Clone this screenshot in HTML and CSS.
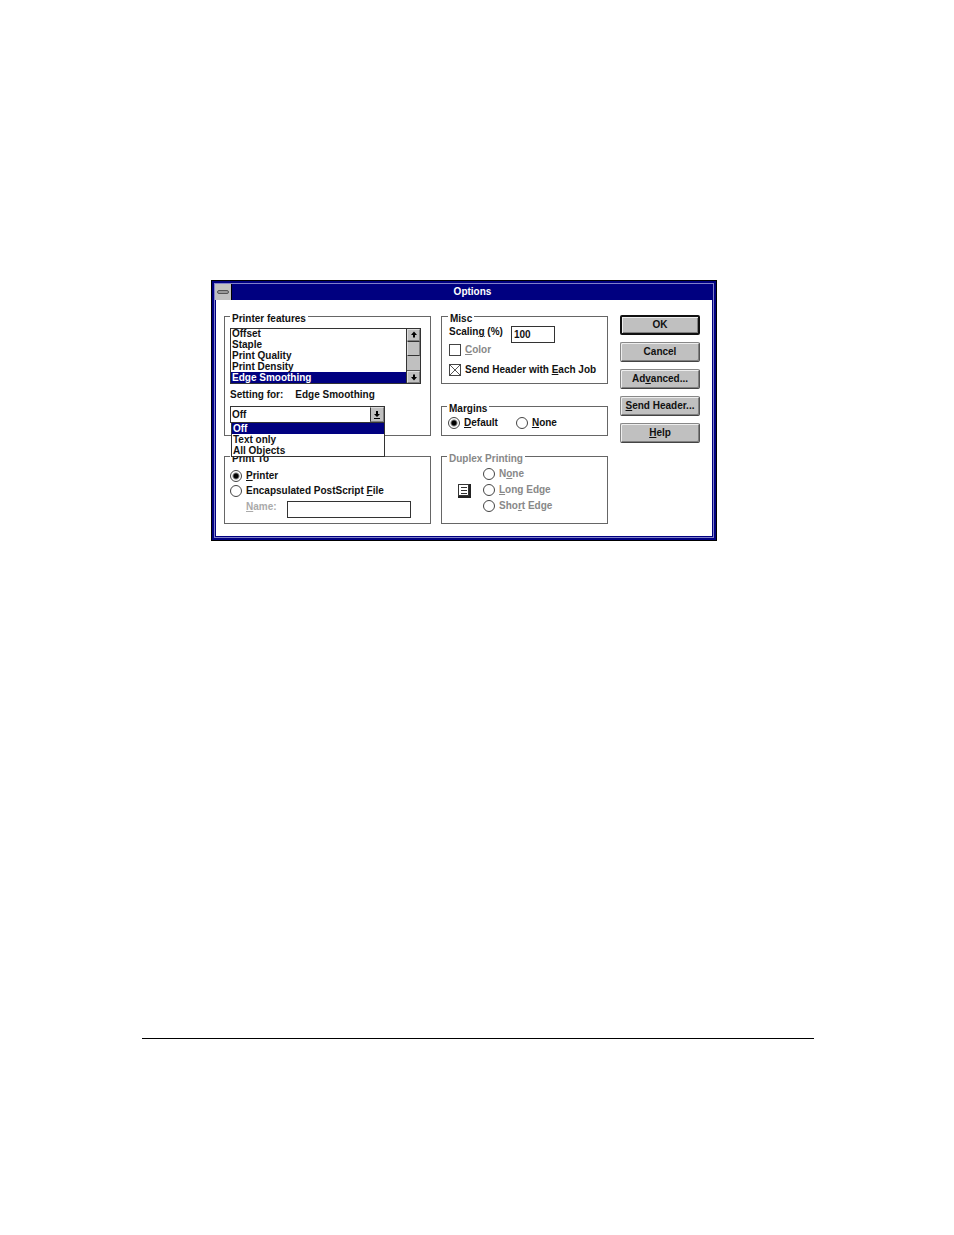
FILE: index.html
```html
<!DOCTYPE html>
<html lang="en">
<head>
  <meta charset="UTF-8">
  <meta name="viewport" content="width=device-width, initial-scale=1.0">
  <title>Options</title>
  <link rel="stylesheet" href="styles.css">
</head>
<body>

  <main class="window">
    <div class="window-inner">
      <header class="titlebar">
        <button type="button" class="sysmenu" aria-label="System menu"><span class="sysmenu-bar"></span></button>
        <h1>Options</h1>
      </header>

      <form class="dialog">
        <div class="groups">

          <fieldset class="features">
            <legend>Printer features</legend>
            <div class="listbox">
              <select size="5" aria-label="Printer features">
                <option>Offset</option>
                <option>Staple</option>
                <option>Print Quality</option>
                <option>Print Density</option>
                <option selected>Edge Smoothing</option>
              </select>
              <div class="scrollbar">
                <button type="button" aria-label="Scroll up">
                  <svg width="8" height="8" viewBox="0 0 8 8"><path d="M4 .5L7 4H5V6.500H3V4H1z"/></svg>
                </button>
                <span class="thumb"></span>
                <span class="track"></span>
                <button type="button" aria-label="Scroll down">
                  <svg width="8" height="8" viewBox="0 0 8 8"><path d="M4 7.500L7 4H5V1.500H3V4H1z"/></svg>
                </button>
              </div>
            </div>
            <div class="setting">
              <label for="setting">Setting for:</label>
              <span>Edge Smoothing</span>
            </div>
            <div class="combo">
              <select id="setting">
                <option selected>Off</option>
                <option>Text only</option>
                <option>All Objects</option>
              </select>
              <span class="combo-arrow">
                <svg width="8" height="10" viewBox="0 0 8 10"><path d="M3 1H5V4H7L4 7L1 4H3zM1 8H7V9H1z"/></svg>
              </span>
              <ul class="menu">
                <li class="selected">Off</li>
                <li>Text only</li>
                <li>All Objects</li>
              </ul>
            </div>
          </fieldset>

          <div class="stack">
            <fieldset class="misc">
              <legend>Misc</legend>
              <div class="scaling">
                <label for="scaling">Scalin<u>g</u> (%)</label>
                <input type="text" id="scaling" value="100">
              </div>
              <label class="check disabled"><input type="checkbox" disabled><span><u>C</u>olor</span></label>
              <label class="check"><input type="checkbox" checked><span>Send Header with <u>E</u>ach Job</span></label>
            </fieldset>

            <fieldset class="margins">
              <legend>Margins</legend>
              <label class="radio"><input type="radio" name="margins" checked><span><u>D</u>efault</span></label>
              <label class="radio"><input type="radio" name="margins"><span><u>N</u>one</span></label>
            </fieldset>
          </div>

          <fieldset class="print-to">
            <legend>Print To</legend>
            <label class="radio"><input type="radio" name="dest" checked><span><u>P</u>rinter</span></label>
            <label class="radio"><input type="radio" name="dest"><span>Encapsulated PostScript <u>F</u>ile</span></label>
            <div class="filename">
              <label for="filename"><u>N</u>ame:</label>
              <input type="text" id="filename">
            </div>
          </fieldset>

          <fieldset class="duplex" disabled>
            <legend>Duplex Printing</legend>
            <svg class="page-icon" width="14" height="15" viewBox="0 0 14 15">
              <path class="page-shadow" d="M1 1H14V15H1z"/>
              <path class="page-sheet" d="M1.500 1.500H11.500V12.500H1.500z"/>
              <path class="page-lines" d="M4 4.500H10M4 7.500H10M4 10.500H10"/>
            </svg>
            <div class="choices">
              <label class="radio"><input type="radio" name="duplex"><span>N<u>o</u>ne</span></label>
              <label class="radio"><input type="radio" name="duplex"><span><u>L</u>ong Edge</span></label>
              <label class="radio"><input type="radio" name="duplex"><span>Sho<u>r</u>t Edge</span></label>
            </div>
          </fieldset>

        </div>

        <div class="buttons">
          <button type="submit" class="btn default">OK</button>
          <button type="button" class="btn">Cancel</button>
          <button type="button" class="btn">Ad<u>v</u>anced...</button>
          <button type="button" class="btn"><u>S</u>end Header...</button>
          <button type="button" class="btn"><u>H</u>elp</button>
        </div>
      </form>
    </div>
  </main>

  <hr class="page-rule">

</body>
</html>
```
FILE: styles.css
```css
* {
  box-sizing: border-box;
}

body {
  display: flex;
  flex-direction: column;
  min-height: 100vh;
  margin: 0;
  padding: 280px 140px 196px 142px;
  background: #fff;
  color: #111;
  font: bold 10px/12px "Liberation Sans", Arial, sans-serif;
}

button,
input,
select,
option {
  margin: 0;
  color: inherit;
  font: inherit;
}

svg {
  display: block;
}

/* window frame */
.window {
  margin: 0 97px 0 69px;
  padding: 2px;
  border: 1px solid #000;
  background: #000080;
}

.window-inner {
  border: 1px solid #8080c8;
}

.titlebar {
  display: flex;
  height: 16px;
  color: #fff;
}

.titlebar h1 {
  flex: 1;
  margin: 0;
  font-size: 10px;
  line-height: 16px;
  text-align: center;
}

.sysmenu {
  display: flex;
  align-items: center;
  justify-content: center;
  width: 17px;
  padding: 0;
  border: 0;
  border-right: 1px solid #000;
  background: #c0c0c0;
}

.sysmenu-bar {
  width: 12px;
  height: 4px;
  border: 1px solid #555;
  border-radius: 2px;
  background: #999;
}

.dialog {
  display: flex;
  gap: 12px;
  margin: 0 1px 1px;
  padding: 8px 12px 12px 8px;
  background: #fff;
}

.groups {
  display: grid;
  flex: 1;
  grid-template-columns: 207fr 167fr;
  gap: 12px 10px;
}

.stack {
  display: flex;
  flex-direction: column;
  justify-content: space-between;
}

/* group boxes */
fieldset {
  min-width: 0;
  margin: 0;
  padding: 0 5px;
  border: 1px solid #666;
}

legend {
  padding: 5px 2px 0;
}

/* printer features */
.features {
  padding: 3px 9px 12px 5px;
}

.listbox {
  display: flex;
  height: 56px;
  border: 1px solid #333;
}

.listbox select {
  flex: 1;
  height: 54px;
  padding: 0;
  border: 0;
  outline: 0;
  border-radius: 0;
  background: #fff;
  overflow: hidden;
}

.listbox option {
  min-height: 11px;
  padding: 0 1px;
  line-height: 11px;
}

.listbox option:checked {
  background: #000080 linear-gradient(#000080, #000080);
  color: #fff;
}

.scrollbar {
  display: flex;
  flex-direction: column;
  width: 14px;
  border-left: 1px solid #333;
}

.scrollbar button,
.thumb,
.combo-arrow {
  display: flex;
  align-items: center;
  justify-content: center;
  padding: 0;
  border: 1px solid;
  border-color: #ddd #808080 #808080 #ddd;
  border-radius: 0;
  background: #c0c0c0;
}

.scrollbar button {
  height: 12px;
}

.thumb {
  height: 15px;
  border-top-color: #333;
  border-bottom-color: #333;
}

.track {
  flex: 1;
  border-bottom: 1px solid #555;
  background: #c0c0c0;
}

.setting {
  display: flex;
  gap: 12px;
  margin: 5px 0;
}

.combo {
  position: relative;
  display: flex;
  width: 155px;
  height: 17px;
  border: 1px solid #333;
}

.combo select {
  flex: 1;
  padding: 0 1px;
  border: 0;
  border-radius: 0;
  background: #fff;
  appearance: none;
}

.combo-arrow {
  width: 14px;
  border-left-color: #333;
}

/* open list hangs over the group below */
.menu {
  position: absolute;
  top: 15px;
  left: 0;
  right: -1px;
  z-index: 1;
  margin: 0;
  padding: 0;
  border: 1px solid #333;
  background: #fff;
  list-style: none;
}

.menu li {
  padding: 0 1px;
  line-height: 11px;
}

.menu .selected {
  background: #000080;
  color: #fff;
}

/* text boxes, check boxes, radio buttons */
input[type="text"] {
  height: 17px;
  padding: 0 2px;
  border: 1px solid #333;
  border-radius: 0;
  background: #fff;
}

.check,
.radio {
  display: flex;
  align-items: center;
  gap: 4px;
}

input[type="checkbox"],
input[type="radio"] {
  flex: none;
  width: 12px;
  height: 12px;
  border: 1px solid #444;
  background: #fff;
  appearance: none;
}

input[type="radio"] {
  border-radius: 50%;
}

input[type="checkbox"]:checked {
  background:
    linear-gradient(45deg, transparent 46%, #555 46%, #555 54%, transparent 54%),
    linear-gradient(135deg, transparent 46%, #555 46%, #555 54%, transparent 54%);
}

input[type="radio"]:checked {
  background: radial-gradient(circle, #000 2px, #fff 4px);
}

.misc {
  padding: 1px 5px 6px 7px;
}

.misc legend,
.margins legend,
.duplex legend {
  margin-left: -1px;
}

.scaling {
  display: flex;
  gap: 8px;
}

.scaling input {
  width: 44px;
}

.check {
  height: 14px;
}

.check + .check {
  margin-top: 6px;
}

.disabled {
  color: #888;
}

.margins {
  display: flex;
  gap: 18px;
  padding: 1px 6px 5px;
}

.margins .radio {
  height: 14px;
}

.print-to {
  padding: 3px 5px 5px;
}

.print-to .radio {
  height: 15px;
}

.filename {
  display: flex;
  gap: 10px;
  margin: 3px 14px 0 16px;
  color: #aaa;
}

.filename input {
  flex: 1;
  min-width: 0;
}

.duplex {
  display: flex;
  align-items: center;
  gap: 12px;
  padding: 1px 6px 9px;
  color: #888;
}

.duplex .radio {
  height: 16px;
}

.page-icon {
  margin-left: 9px;
}

.page-shadow {
  fill: #222;
}

.page-sheet {
  fill: #fff;
  stroke: #333;
}

.page-lines {
  stroke: #333;
}

/* push buttons */
.buttons {
  display: flex;
  flex-direction: column;
  gap: 7px;
  width: 80px;
  margin-top: 7px;
}

.btn {
  height: 20px;
  padding: 0;
  border: 1px solid;
  border-color: #888 #555 #444 #888;
  border-radius: 2px;
  background: #c0c0c0;
  box-shadow: inset 1px 1px #eee, inset -1px -1px #808080;
  white-space: nowrap;
}

.btn.default {
  border: 2px solid #111;
}

/* page */
.page-rule {
  width: 100%;
  margin: auto 0 0;
  border: 0;
  border-top: 1px solid #000;
}
```
